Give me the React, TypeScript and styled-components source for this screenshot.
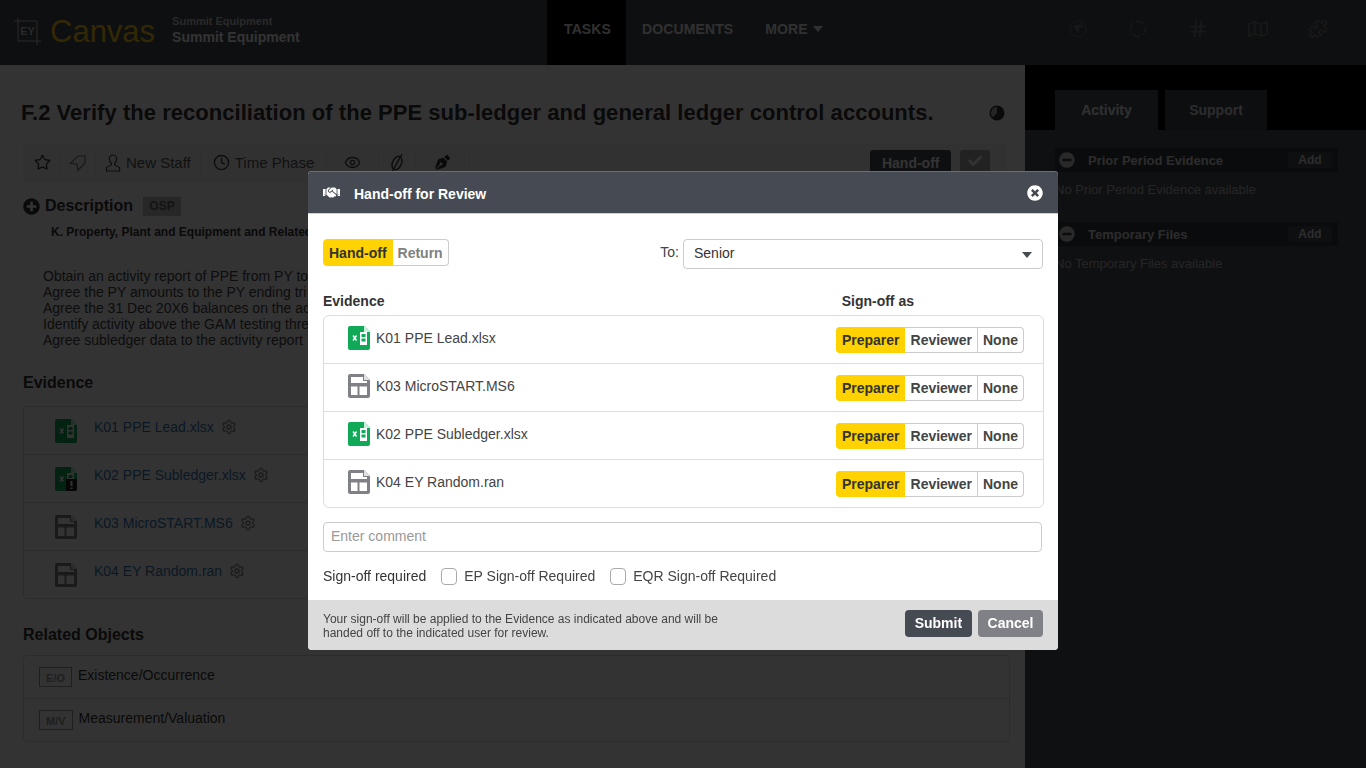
import React from "react";
import styled, { createGlobalStyle } from "styled-components";
import { Star, Clock, Eye, Hash, Puzzle, Settings } from "lucide-react";
import { FaCheck, FaHandshake, FaMinusCircle, FaPenNib, FaPlusCircle, FaRegMap, FaTimesCircle } from "react-icons/fa";

const GlobalStyle = createGlobalStyle`
  html, body {
    margin: 0;
    height: 100%;
    overflow: hidden;
    background: #fff;
    color: #333;
    font-family: "Liberation Sans", Arial, sans-serif;
    font-size: 14px;
  }
  * { box-sizing: border-box; }
`;

const Page = styled.div`
  width: 1366px;
  height: 768px;
  display: flex;
  flex-direction: column;
  overflow: hidden;
`;

const Header = styled.header`
  height: 65px;
  flex: none;
  display: flex;
  align-items: center;
  background: #444a52;
`;

const Brand = styled.div`
  width: 547px;
  display: flex;
  align-items: center;
  padding-left: 14px;
  margin-bottom: 2px;
`;

const LogoText = styled.span`
  font-size: 31px;
  line-height: 1;
  color: #ffc81e;
  margin: 0 17px 0 9px;
`;

const Client = styled.div`
  display: flex;
  flex-direction: column;
  gap: 1px;
  margin-bottom: 2px;
  color: #fff;
  font-weight: bold;
  font-size: 14px;
  line-height: 17px;
  small {
    font-size: 11px;
    line-height: 13px;
    color: #ccc;
  }
`;

const Nav = styled.nav`
  display: flex;
  height: 100%;
  flex: 1;
`;

const NavItem = styled.a<{ $active?: boolean }>`
  display: flex;
  align-items: center;
  gap: 5px;
  height: 100%;
  padding: 0 ${(p) => (p.$active ? "15px" : "16px")} 7px ${(p) => (p.$active ? "17px" : "16px")};
  font-weight: bold;
  font-size: 14px;
  letter-spacing: 0.12px;
  color: #eee;
  background: ${(p) => (p.$active ? "#000" : "transparent")};
`;

const Caret = styled.i<{ $color: string }>`
  width: 0;
  height: 0;
  border-left: 5px solid transparent;
  border-right: 5px solid transparent;
  border-top: 6px solid ${(p) => p.$color};
`;

const SelectCaret = styled(Caret)`
  margin-top: 4px;
`;

const HeaderIcons = styled.div`
  display: flex;
  gap: 40px;
  margin-right: 38px;
  margin-bottom: 7px;
  color: #777;
`;

const HeaderIconCell = styled.span`
  width: 20px;
  height: 20px;
  display: flex;
  align-items: center;
  justify-content: center;
`;

const Body = styled.div`
  flex: 1;
  display: flex;
  min-height: 0;
`;

const Main = styled.main`
  width: 1025px;
  flex: none;
  background: #fff;
  padding: 34px 15px 0 23px;
`;

const TitleRow = styled.div`
  display: flex;
  align-items: center;
  justify-content: space-between;
  height: 28px;
  margin-left: -2px;
  padding-right: 5px;
`;

const Title = styled.h1`
  margin: 0;
  font-size: 22px;
  line-height: 28px;
  font-weight: bold;
  letter-spacing: 0.035px;
  color: #333;
`;

const Toolbar = styled.div`
  height: 39px;
  margin-top: 16px;
  margin-right: 4px;
  display: flex;
  align-items: center;
  background: #f6f6f6;
  padding-left: 2px;
  padding-right: 16px;
`;

const ToolItem = styled.div<{ $pad?: number }>`
  display: flex;
  align-items: center;
  gap: 5px;
  height: 25px;
  padding: 0 ${(p) => p.$pad ?? 9}px;
  border-right: 1px solid #e6e6e6;
  font-size: 15px;
  color: #555;
  &:last-of-type { border-right: 0; }
`;

const ToolActions = styled.div`
  margin-left: auto;
  display: flex;
  gap: 9px;
`;

const DarkButton = styled.button<{ $muted?: boolean }>`
  height: 26px;
  padding: 0 ${(p) => (p.$muted ? "8px" : "11.5px")};
  border: 0;
  border-radius: 3px;
  background: ${(p) => (p.$muted ? "#a8a8a8" : "#464a52")};
  color: #fff;
  font: bold 14px "Liberation Sans", Arial, sans-serif;
`;

const DescriptionHead = styled.div`
  display: flex;
  align-items: center;
  margin-top: 13px;
  height: 22px;
  font-size: 16px;
  font-weight: bold;
  color: #333;
  gap: 5px;
`;

const OspTag = styled.span`
  margin-left: 5px;
  width: 38px;
  height: 19px;
  line-height: 19px;
  text-align: center;
  font-size: 12px;
  background: #c0c0c0;
  color: #666;
`;

const DescriptionTitle = styled.div`
  margin: 7px 0 0 28px;
  white-space: nowrap;
  font-size: 12px;
  line-height: 16px;
  font-weight: bold;
  color: #333;
`;

const StepList = styled.div`
  margin: 28px 0 -1px 20px;
  white-space: nowrap;
  font-size: 14px;
  line-height: 16px;
  color: #444;
`;

const SectionTitle = styled.h2`
  margin: 26px 0 0;
  font-size: 16px;
  line-height: 20px;
  font-weight: bold;
  color: #333;
`;

const PanelList = styled.div`
  margin-top: 13px;
  border: 1px solid #ddd;
  border-radius: 4px;
`;

const RelatedList = styled(PanelList)`
  margin-top: 10px;
`;

const EvidenceRow = styled.div`
  height: 48px;
  display: flex;
  align-items: center;
  padding-left: 31px;
  font-size: 14px;
  border-top: 1px solid #ddd;
  &:first-child { border-top: 0; height: 47px; }
  a { color: #337ab7; margin: 0 7px 8px 17px; }
  svg:last-child { color: #888; margin-bottom: 8px; }
`;

const RelatedRow = styled.div`
  height: 43px;
  display: flex;
  align-items: center;
  padding: 0 0 4px 15px;
  gap: 6px;
  font-size: 14px;
  color: #333;
  border-top: 1px solid #ddd;
  &:first-child { border-top: 0; height: 42px; }
`;

const CodeTag = styled.span`
  padding: 0 6px;
  height: 20px;
  line-height: 20px;
  margin-top: 4px;
  border: 1px solid #999;
  font-size: 11px;
  font-weight: bold;
  color: #999;
`;

const Aside = styled.aside`
  flex: 1;
  background: #4c525a;
  color: #fff;
`;

const TabBar = styled.div`
  height: 65px;
  background: #000;
  display: flex;
  align-items: flex-end;
  gap: 7px;
  padding-left: 30px;
`;

const SideTab = styled.div<{ $active?: boolean }>`
  height: 40px;
  width: ${(p) => (p.$active ? "103px" : "102px")};
  display: flex;
  align-items: center;
  justify-content: center;
  font-weight: bold;
  font-size: 14px;
  background: ${(p) => (p.$active ? "#4c525a" : "#444850")};
  color: ${(p) => (p.$active ? "#eee" : "#ddd")};
`;

const SidePanels = styled.div`
  padding: 18px 28px 0 30px;
`;

const SideHead = styled.div`
  height: 24px;
  display: flex;
  align-items: center;
  gap: 13px;
  padding: 0 6px 0 4px;
  background: #353a40;
  font-size: 13px;
  font-weight: bold;
  color: #ddd;
`;

const AddButton = styled.span`
  margin-left: auto;
  width: 44px;
  height: 16px;
  line-height: 17px;
  text-align: center;
  font-size: 12px;
  border-radius: 3px;
  background: #464a52;
`;

const SideEmpty = styled.p`
  margin: 10px 0 24px;
  height: 16px;
  font-size: 13px;
  line-height: 16px;
  color: #bbb;
`;

const Backdrop = styled.div`
  position: fixed;
  inset: 0;
  display: flex;
  justify-content: center;
  align-items: flex-start;
  padding-top: 171px;
  background: rgba(0, 0, 0, 0.8);
`;

const Modal = styled.section`
  width: 750px;
  height: 479px;
  display: flex;
  flex-direction: column;
  background: #fff;
  border-radius: 4px;
  overflow: hidden;
`;

const ModalHeader = styled.div`
  height: 43px;
  flex: none;
  display: flex;
  align-items: center;
  padding: 0 15px;
  background: #464a52;
  border-top: 1px solid #6a6e75;
  border-bottom: 1px solid #d0d0d0;
  color: #fff;
  font-weight: bold;
  font-size: 14px;
  span { margin: 2px 0 0 14px; flex: 1; }
`;

const ModalBody = styled.div`
  flex: 1;
  padding: 25px 15px 0;
`;

const TopRow = styled.div`
  display: flex;
  align-items: flex-start;
  justify-content: space-between;
`;

const Segments = styled.div`
  display: inline-flex;
`;

const Segment = styled.span<{ $active?: boolean; $muted?: boolean }>`
  height: 26px;
  line-height: 24px;
  padding: 0 5px;
  font-size: 14px;
  font-weight: bold;
  border: 1px solid ${(p) => (p.$active ? "#ffd200" : "#ccc")};
  border-left-width: ${(p) => (p.$active ? "1px" : "0")};
  border-right-width: ${(p) => (p.$active ? "0" : "1px")};
  background: ${(p) => (p.$active ? "#ffd200" : "#fff")};
  color: ${(p) => (p.$active ? "#333" : p.$muted ? "#808080" : "#444")};
  &:first-child { border-radius: 4px 0 0 4px; }
  &:nth-child(2) { padding-left: 6px; }
  &:last-child { border-radius: 0 4px 4px 0; }
`;

const ToggleSegment = styled(Segment)`
  height: 27px;
  line-height: 27px;
  border-right-width: 1px;
  &:nth-child(2) { padding-left: 5px; }
`;

const ToField = styled.div`
  display: flex;
  align-items: center;
  gap: 4px;
  font-size: 14px;
  color: #444;
`;

const ToLabel = styled.span`
  margin-bottom: 4px;
`;

const SelectBox = styled.div`
  width: 360px;
  height: 30px;
  display: flex;
  align-items: center;
  justify-content: space-between;
  padding: 0 10px 2px 10px;
  border: 1px solid #ccc;
  border-radius: 4px;
  color: #333;
`;

const ColumnHeads = styled.div`
  display: flex;
  justify-content: space-between;
  margin-top: 24px;
  padding-right: 129px;
  font-size: 14px;
  line-height: 17px;
  font-weight: bold;
  color: #333;
`;

const SignList = styled.div`
  margin-top: 5px;
  margin-right: -1px;
  border: 1px solid #ddd;
  border-radius: 6px;
`;

const SignRow = styled.div`
  height: 48px;
  display: flex;
  align-items: center;
  justify-content: space-between;
  padding: 0 19px 0 24px;
  border-top: 1px solid #ddd;
  &:first-child { border-top: 0; height: 47px; }
`;

const FileName = styled.div`
  display: flex;
  align-items: center;
  gap: 6px;
  font-size: 14px;
  color: #444;
  margin-top: -4px;
`;

const CommentInput = styled.input`
  display: block;
  width: 719px;
  height: 30px;
  margin-top: 14px;
  padding: 0 7px 2px;
  border: 1px solid #ccc;
  border-radius: 4px;
  font: 14px "Liberation Sans", Arial, sans-serif;
  &::placeholder { color: #999; opacity: 1; }
`;

const RequiredRow = styled.div`
  display: flex;
  align-items: center;
  margin-top: 14px;
  height: 20px;
  font-size: 14px;
  color: #333;
`;

const Check = styled.label`
  display: flex;
  align-items: center;
  gap: 7px;
  margin-left: 15px;
  color: #444;
  input {
    appearance: none;
    width: 16px;
    height: 17px;
    margin: 0;
    border: 1px solid #aaa;
    border-radius: 4px;
    background: #fff;
  }
`;

const ModalFooter = styled.div`
  height: 50px;
  flex: none;
  display: flex;
  align-items: center;
  justify-content: space-between;
  padding: 0 15px;
  background: #dcdcdc;
  p {
    margin: 2px 0 0;
    width: 420px;
    font-size: 12px;
    line-height: 14px;
    color: #444;
  }
`;

const FooterActions = styled.div`
  display: flex;
  gap: 6px;
  margin-bottom: 4px;
`;

const FooterButton = styled.button<{ $cancel?: boolean }>`
  height: 27px;
  padding: 0 ${(p) => (p.$cancel ? "9.5px" : "10px")};
  border: 0;
  border-radius: 4px;
  background: ${(p) => (p.$cancel ? "#808187" : "#464a52")};
  color: #fff;
  font: bold 14px "Liberation Sans", Arial, sans-serif;
`;

const LogoMark = () => (
  <svg width="27" height="27" viewBox="0 0 27 27">
    <path d="M4 0v23h23M0 3h23v24" fill="none" stroke="#d0d0d0" strokeWidth="1" />
    <text x="13.5" y="17" textAnchor="middle" fontSize="11" fontWeight="bold" fill="#ccc" fontFamily="Liberation Sans">EY</text>
  </svg>
);

const ExcelIcon = ({ alert }: { alert?: boolean }) => (
  <svg width="22" height="24" viewBox="0 0 22 24" style={{ flex: "none" }}>
    <path d="M2 0h14l6 6v16a2 2 0 0 1-2 2H2a2 2 0 0 1-2-2V2a2 2 0 0 1 2-2z" fill="#0fa958" />
    <path d="M16 0l6 6h-6z" fill="#cfeedd" />
    <path d="M12 6h7v13h-7z" fill="#fff" />
    <path d="M13.5 8h4v3h-4zM13.5 12.5h4v3h-4z" fill="#0fa958" />
    <path d="M5 9.5l3.5 5M8.5 9.5l-3.5 5" stroke="#fff" strokeWidth="1.4" />
    {alert && <path d="M11 12h11v10a2 2 0 0 1-2 2h-9z" fill="#222" />}
    {alert && <path d="M16.5 14v5M16.5 20.5v1.5" stroke="#fff" strokeWidth="2" />}
  </svg>
);

const FileIcon = () => (
  <svg width="22" height="24" viewBox="0 0 22 24" style={{ flex: "none" }}>
    <path d="M2 0h14l6 6v16a2 2 0 0 1-2 2H2a2 2 0 0 1-2-2V2a2 2 0 0 1 2-2z" fill="#808087" />
    <path d="M16 0l6 6h-6z" fill="#e0e0e0" />
    <path d="M3 3h12v4h4v2H3zM3 12.5h6.5V21H3zM11.5 12.5H19V21h-7.5z" fill="#fff" />
  </svg>
);

const PieIcon = () => (
  <svg width="16" height="16" viewBox="0 0 16 16">
    <circle cx="8" cy="8" r="7.5" fill="#333" />
    <path d="M8 2a6 6 0 0 0-4.2 10.2L8 8z" fill="#bbb" />
  </svg>
);

const PinTag = () => (
  <svg width="18" height="18" viewBox="0 0 18 18" fill="none" stroke="#777" strokeWidth="1.2">
    <path d="M1.5 9.5L9 2h7v7l-7 7.5-1-6.5z" />
  </svg>
);

const PersonIcon = () => (
  <svg width="16" height="18" viewBox="0 0 16 18" fill="none" stroke="#444" strokeWidth="1.2">
    <path d="M8 1a3.6 4 0 0 1 3.6 4c0 2-1 3.5-2 4.5V11l5 2.5V17H1.4v-3.5l5-2.5V9.5c-1-1-2-2.5-2-4.5A3.6 4 0 0 1 8 1z" />
  </svg>
);

const SlashLink = () => (
  <svg width="16" height="20" viewBox="0 0 16 20" fill="none" stroke="#444" strokeWidth="1.5">
    <ellipse cx="8" cy="10" rx="4.5" ry="7" transform="rotate(25 8 10)" />
    <path d="M13 1L3 19" />
  </svg>
);

const FlagCircle = () => (
  <svg width="18" height="18" viewBox="0 0 18 18" fill="none" stroke="currentColor">
    <circle cx="9" cy="9" r="8" />
    <path d="M4 7c3-3 8-3 10-1-1 2-3 2-4 2l-1 5c-2-2-2-4-5-6z" fill="currentColor" stroke="none" />
  </svg>
);

const DashedCircle = () => (
  <svg width="18" height="18" viewBox="0 0 18 18" fill="none" stroke="currentColor" strokeWidth="1.5">
    <circle cx="9" cy="9" r="7.5" strokeDasharray="9 2.8" transform="rotate(-20 9 9)" />
  </svg>
);

const evidence = [
  { name: "K01 PPE Lead.xlsx", kind: "xls" },
  { name: "K02 PPE Subledger.xlsx", kind: "xls", alert: true },
  { name: "K03 MicroSTART.MS6", kind: "file" },
  { name: "K04 EY Random.ran", kind: "file" },
];

const signoff = [
  { name: "K01 PPE Lead.xlsx", kind: "xls" },
  { name: "K03 MicroSTART.MS6", kind: "file" },
  { name: "K02 PPE Subledger.xlsx", kind: "xls" },
  { name: "K04 EY Random.ran", kind: "file" },
];

// only the part of each line that shows left of the dialog
const steps = [
  "Obtain an activity report of PPE from PY to",
  "Agree the PY amounts to the PY ending tri",
  "Agree the 31 Dec 20X6 balances on the ac",
  "Identify activity above the GAM testing thre",
  "Agree subledger data to the activity report",
];

export default function App() {
  return (
    <Page>
      <GlobalStyle />
      <Header>
        <Brand>
          <LogoMark />
          <LogoText>Canvas</LogoText>
          <Client>
            <small>Summit Equipment</small>
            Summit Equipment
          </Client>
        </Brand>
        <Nav>
          <NavItem $active>TASKS</NavItem>
          <NavItem>DOCUMENTS</NavItem>
          <NavItem>
            MORE <Caret $color="#eee" />
          </NavItem>
        </Nav>
        <HeaderIcons>
          <HeaderIconCell><FlagCircle /></HeaderIconCell>
          <HeaderIconCell><DashedCircle /></HeaderIconCell>
          <HeaderIconCell><Hash size={22} strokeWidth={2.5} /></HeaderIconCell>
          <HeaderIconCell><FaRegMap size={20} /></HeaderIconCell>
          <HeaderIconCell><Puzzle size={20} /></HeaderIconCell>
        </HeaderIcons>
      </Header>
      <Body>
        <Main>
          <TitleRow>
            <Title>F.2 Verify the reconciliation of the PPE sub-ledger and general ledger control accounts.</Title>
            <PieIcon />
          </TitleRow>
          <Toolbar>
            <ToolItem $pad={9}><Star size={17} color="#444" /></ToolItem>
            <ToolItem $pad={8}><PinTag /></ToolItem>
            <ToolItem $pad={9}><PersonIcon />New Staff</ToolItem>
            <ToolItem $pad={12}><Clock size={17} color="#444" />Time Phase</ToolItem>
            <ToolItem $pad={17}><Eye size={17} color="#444" /></ToolItem>
            <ToolItem $pad={10}><SlashLink /></ToolItem>
            <ToolItem $pad={19}><FaPenNib size={15} color="#333" /></ToolItem>
            <ToolActions>
              <DarkButton>Hand-off</DarkButton>
              <DarkButton $muted><FaCheck size={14} /></DarkButton>
            </ToolActions>
          </Toolbar>
          <DescriptionHead>
            <FaPlusCircle size={17} color="#333" />
            Description
            <OspTag>OSP</OspTag>
          </DescriptionHead>
          <DescriptionTitle>K. Property, Plant and Equipment and Related</DescriptionTitle>
          <StepList>
            {steps.map((s) => (
              <div key={s}>{s}</div>
            ))}
          </StepList>
          <SectionTitle>Evidence</SectionTitle>
          <PanelList>
            {evidence.map((e) => (
              <EvidenceRow key={e.name}>
                {e.kind === "xls" ? <ExcelIcon alert={e.alert} /> : <FileIcon />}
                <a>{e.name}</a>
                <Settings size={16} />
              </EvidenceRow>
            ))}
          </PanelList>
          <SectionTitle>Related Objects</SectionTitle>
          <RelatedList>
            <RelatedRow><CodeTag>E/O</CodeTag>Existence/Occurrence</RelatedRow>
            <RelatedRow><CodeTag>M/V</CodeTag>Measurement/Valuation</RelatedRow>
          </RelatedList>
        </Main>
        <Aside>
          <TabBar>
            <SideTab $active>Activity</SideTab>
            <SideTab>Support</SideTab>
          </TabBar>
          <SidePanels>
            <SideHead>
              <FaMinusCircle size={16} color="#ccc" />
              Prior Period Evidence
              <AddButton>Add</AddButton>
            </SideHead>
            <SideEmpty>No Prior Period Evidence available</SideEmpty>
            <SideHead>
              <FaMinusCircle size={16} color="#ccc" />
              Temporary Files
              <AddButton>Add</AddButton>
            </SideHead>
            <SideEmpty>No Temporary Files available</SideEmpty>
          </SidePanels>
        </Aside>
      </Body>
      <Backdrop>
        <Modal>
          <ModalHeader>
            <FaHandshake size={17} />
            <span>Hand-off for Review</span>
            <FaTimesCircle size={16} />
          </ModalHeader>
          <ModalBody>
            <TopRow>
              <Segments>
                <ToggleSegment $active>Hand-off</ToggleSegment>
                <ToggleSegment $muted>Return</ToggleSegment>
              </Segments>
              <ToField>
                <ToLabel>To:</ToLabel>
                <SelectBox>
                  Senior
                  <SelectCaret $color="#464a52" />
                </SelectBox>
              </ToField>
            </TopRow>
            <ColumnHeads>
              <span>Evidence</span>
              <span>Sign-off as</span>
            </ColumnHeads>
            <SignList>
              {signoff.map((f) => (
                <SignRow key={f.name}>
                  <FileName>
                    {f.kind === "xls" ? <ExcelIcon /> : <FileIcon />}
                    {f.name}
                  </FileName>
                  <Segments>
                    <Segment $active>Preparer</Segment>
                    <Segment>Reviewer</Segment>
                    <Segment>None</Segment>
                  </Segments>
                </SignRow>
              ))}
            </SignList>
            <CommentInput placeholder="Enter comment" />
            <RequiredRow>
              Sign-off required
              <Check><input type="checkbox" />EP Sign-off Required</Check>
              <Check><input type="checkbox" />EQR Sign-off Required</Check>
            </RequiredRow>
          </ModalBody>
          <ModalFooter>
            <p>Your sign-off will be applied to the Evidence as indicated above and will be handed off to the indicated user for review.</p>
            <FooterActions>
              <FooterButton>Submit</FooterButton>
              <FooterButton $cancel>Cancel</FooterButton>
            </FooterActions>
          </ModalFooter>
        </Modal>
      </Backdrop>
    </Page>
  );
}
